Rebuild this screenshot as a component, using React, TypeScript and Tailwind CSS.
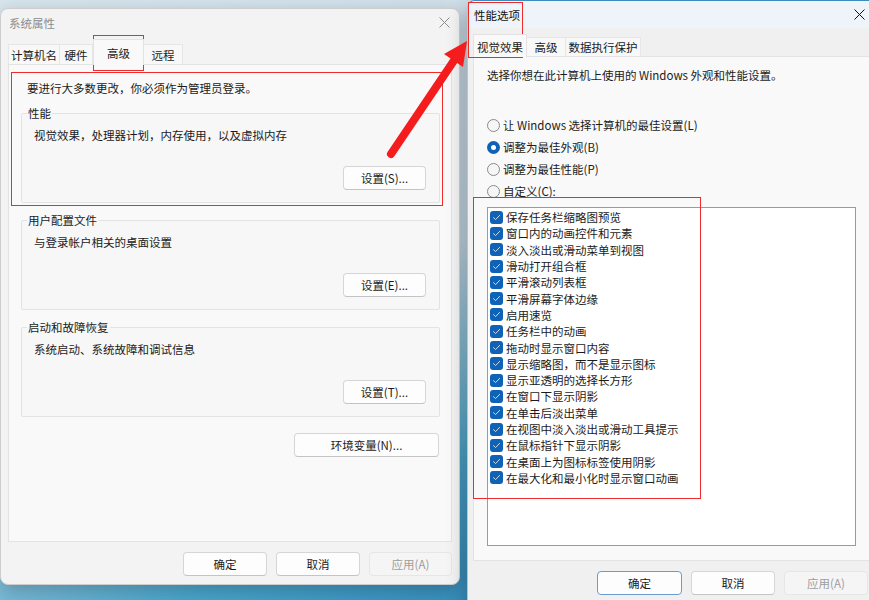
import type { ReactNode } from "react"

const perfItems = [
  "保存任务栏缩略图预览",
  "窗口内的动画控件和元素",
  "淡入淡出或滑动菜单到视图",
  "滑动打开组合框",
  "平滑滚动列表框",
  "平滑屏幕字体边缘",
  "启用速览",
  "任务栏中的动画",
  "拖动时显示窗口内容",
  "显示缩略图，而不是显示图标",
  "显示亚透明的选择长方形",
  "在窗口下显示阴影",
  "在单击后淡出菜单",
  "在视图中淡入淡出或滑动工具提示",
  "在鼠标指针下显示阴影",
  "在桌面上为图标标签使用阴影",
  "在最大化和最小化时显示窗口动画",
]

const radios = [
  { label: "让 Windows 选择计算机的最佳设置(L)", checked: false },
  { label: "调整为最佳外观(B)", checked: true },
  { label: "调整为最佳性能(P)", checked: false },
  { label: "自定义(C):", checked: false },
]

function CloseIcon() {
  return (
    <svg width="11" height="11" viewBox="0 0 11 11" fill="none">
      <path d="M0.5 0.5L10.5 10.5M10.5 0.5L0.5 10.5" stroke="currentColor" strokeWidth="1" />
    </svg>
  )
}

function Button({
  children,
  width,
  disabled,
  primary,
}: {
  children: ReactNode
  width: string
  disabled?: boolean
  primary?: boolean
}) {
  const base = "h-[24px] flex items-center justify-center rounded-[4px] text-[11.5px] leading-[14px] border"
  let look = "bg-[#fdfdfd] border-[#d6d6d6] border-b-[#c4c4c4] text-[#1b1b1b]"
  if (disabled) look = "bg-[#f5f5f5] border-[#e6e6e6] text-[#9d9d9d]"
  if (primary) look = "bg-[#fdfdfd] border-[#6c9bd0] text-[#1b1b1b]"
  return <div className={`${base} ${look} ${width}`}>{children}</div>
}

function Group({ title, desc, button }: { title: string; desc: string; button: string }) {
  return (
    <fieldset className="ml-[12px] mr-[11px] border border-[#e3e3e3] bg-[#f7f7f7] rounded-[2px] pt-[8px] pb-[12px]">
      <legend className="ml-[5px] px-[1px] leading-[14px] text-[11.5px] text-[#1b1b1b]">{title}</legend>
      <div className="pl-[12px] leading-[14px] text-[11.5px] text-[#1b1b1b]">{desc}</div>
      <div className="flex justify-end mt-[24px] pr-[13px]">
        <Button width="w-[83px]">{button}</Button>
      </div>
    </fieldset>
  )
}

function Checkbox() {
  return (
    <div className="w-[13px] h-[13px] rounded-[3px] bg-[#0f62b5] flex items-center justify-center">
      <svg width="9" height="9" viewBox="0 0 9 9" fill="none">
        <path d="M1.5 4.6L3.6 6.6L7.6 2.4" stroke="#c9dcf1" strokeWidth="1" strokeLinecap="round" strokeLinejoin="round" />
      </svg>
    </div>
  )
}

function Radio({ checked }: { checked: boolean }) {
  if (checked) {
    return (
      <div className="w-[13px] h-[13px] rounded-full bg-[#0f62b5] flex items-center justify-center">
        <div className="w-[5px] h-[5px] rounded-full bg-white" />
      </div>
    )
  }
  return <div className="w-[13px] h-[13px] rounded-full border border-[#8a8a8a] bg-[#f6f6f6]" />
}

function SystemProperties() {
  return (
    <div className="absolute left-0 top-[8px] w-[460px] h-[577px] rounded-[8px] bg-[#f3f3f3] border border-[#cdcdcd] shadow-[0_6px_20px_rgba(0,0,0,0.25)] flex flex-col">
      <div className="h-[27px] flex items-center justify-between pl-[8px] pr-[9px] text-[#8c8c8c] text-[11.5px] leading-[14px]">
        <span>系统属性</span>
        <CloseIcon />
      </div>
      <div className="pt-[8px] px-[7px] flex items-end h-[28px] text-[11.5px] leading-[14px] text-[#1b1b1b]">
        <div className="w-[52px] h-[20px] flex items-center justify-center bg-[#f8f8f8] border border-[#e6e6e6] border-b-0">计算机名</div>
        <div className="w-[33px] h-[20px] flex items-center justify-center bg-[#f8f8f8] border-t border-r border-[#e6e6e6]">硬件</div>
        <div className="w-[51px] h-[26px] -mb-[1px] relative z-10 flex items-center justify-center pt-[1px] bg-[#f9f9f9] border border-[#e3e3e3] border-b-0">高级</div>
        <div className="w-[39px] h-[20px] flex items-center justify-center bg-[#f8f8f8] border-t border-r border-[#e6e6e6]">远程</div>
      </div>
      <div className="mx-[7px] h-[478px] bg-[#f9f9f9] border border-[#e3e3e3] flex flex-col">
        <div className="pt-[16px] pl-[18px] leading-[14px] text-[11.5px] text-[#1b1b1b]">
          要进行大多数更改，你必须作为管理员登录。
        </div>
        <div className="mt-[11px]">
          <Group title="性能" desc="视觉效果，处理器计划，内存使用，以及虚拟内存" button="设置(S)..." />
        </div>
        <div className="mt-[10px]">
          <Group title="用户配置文件" desc="与登录帐户相关的桌面设置" button="设置(E)..." />
        </div>
        <div className="mt-[10px]">
          <Group title="启动和故障恢复" desc="系统启动、系统故障和调试信息" button="设置(T)..." />
        </div>
        <div className="flex justify-end mt-[16px] pr-[12px]">
          <Button width="w-[145px]">环境变量(N)...</Button>
        </div>
      </div>
      <div className="flex justify-end gap-[9px] pt-[10px] pr-[7px]">
        <Button width="w-[84px]">确定</Button>
        <Button width="w-[84px]">取消</Button>
        <Button width="w-[83px]" disabled>
          应用(A)
        </Button>
      </div>
    </div>
  )
}

function PerformanceOptions() {
  return (
    <div className="absolute left-[467px] top-0 w-[410px] h-[620px] rounded-t-[8px] bg-[#f0f0f0] border border-[#b9c4cc] border-t-[#3d8cc0] shadow-[0_6px_20px_rgba(0,0,0,0.3)] flex flex-col">
      <div className="h-[27px] flex items-center justify-between pl-[6px] pr-[11px] bg-[#eef4f9] text-[#111] text-[11.5px] leading-[14px] rounded-t-[8px]">
        <span>性能选项</span>
        <CloseIcon />
      </div>
      <div className="pt-[8px] px-[5px] flex items-end h-[28px] text-[11.5px] leading-[14px] text-[#1b1b1b]">
        <div className="w-[54px] h-[23px] -mb-[1px] relative z-10 flex items-center justify-center pt-[1px] bg-[#f9f9f9] border border-[#e3e3e3] border-b-0">视觉效果</div>
        <div className="w-[39px] h-[19px] flex items-center justify-center bg-[#f8f8f8] border-t border-r border-[#e6e6e6]">高级</div>
        <div className="w-[75px] h-[19px] flex items-center justify-center bg-[#f8f8f8] border-t border-r border-[#e6e6e6]">数据执行保护</div>
      </div>
      <div className="mx-[5px] h-[505px] bg-[#f9f9f9] border border-[#e3e3e3] flex flex-col text-[11.5px] text-[#1b1b1b]">
        <div className="pt-[11px] pl-[13px] leading-[14px]">选择你想在此计算机上使用的 Windows 外观和性能设置。</div>
        <div className="mt-[32px] pl-[13px] flex flex-col">
          {radios.map((r) => (
            <div key={r.label} className="h-[22px] flex items-center gap-[3px] leading-[14px]">
              <Radio checked={r.checked} />
              <span>{r.label}</span>
            </div>
          ))}
        </div>
        <div className="mt-[5px] ml-[13px] w-[369px] h-[339px] bg-white border border-[#9a9a9a] pt-[1px] pl-[2px] flex flex-col">
          {perfItems.map((item) => (
            <div key={item} className="h-[16.3px] flex items-center gap-[3px] leading-[14px]">
              <Checkbox />
              <span>{item}</span>
            </div>
          ))}
        </div>
      </div>
      <div className="flex justify-end gap-[9px] pt-[10px] pr-[8px]">
        <Button width="w-[85px]" primary>
          确定
        </Button>
        <Button width="w-[84px]">取消</Button>
        <Button width="w-[84px]" disabled>
          应用(A)
        </Button>
      </div>
    </div>
  )
}

function Annotations() {
  const red = "absolute border-[1.5px] border-[#ef2b2b] pointer-events-none"
  return (
    <>
      <div className={`${red} left-[93px] top-[35px] w-[51px] h-[36px]`} />
      <div className={`${red} left-[11px] top-[72px] w-[432px] h-[134px]`} />
      <div className={`${red} left-[468px] top-[2px] w-[55px] h-[56px]`} />
      <div className={`${red} left-[473px] top-[197px] w-[228px] h-[302px]`} />
      <svg className="absolute left-0 top-0 pointer-events-none" width="869" height="600" viewBox="0 0 869 600">
        <line x1="391" y1="154" x2="455" y2="59" stroke="#f41c1c" strokeWidth="8" strokeLinecap="round" />
        <polygon points="467,41 444,54 463,67" fill="#f41c1c" />
      </svg>
    </>
  )
}

export default function App() {
  return (
    <div className="relative w-[869px] h-[600px] overflow-hidden font-['Noto_Sans_CJK_SC','Noto_Sans',sans-serif] bg-[linear-gradient(155deg,#d8e6ee_0%,#c9dde9_45%,#4aa8cf_68%,#1f72ad_100%)]">
      <SystemProperties />
      <PerformanceOptions />
      <Annotations />
    </div>
  )
}
